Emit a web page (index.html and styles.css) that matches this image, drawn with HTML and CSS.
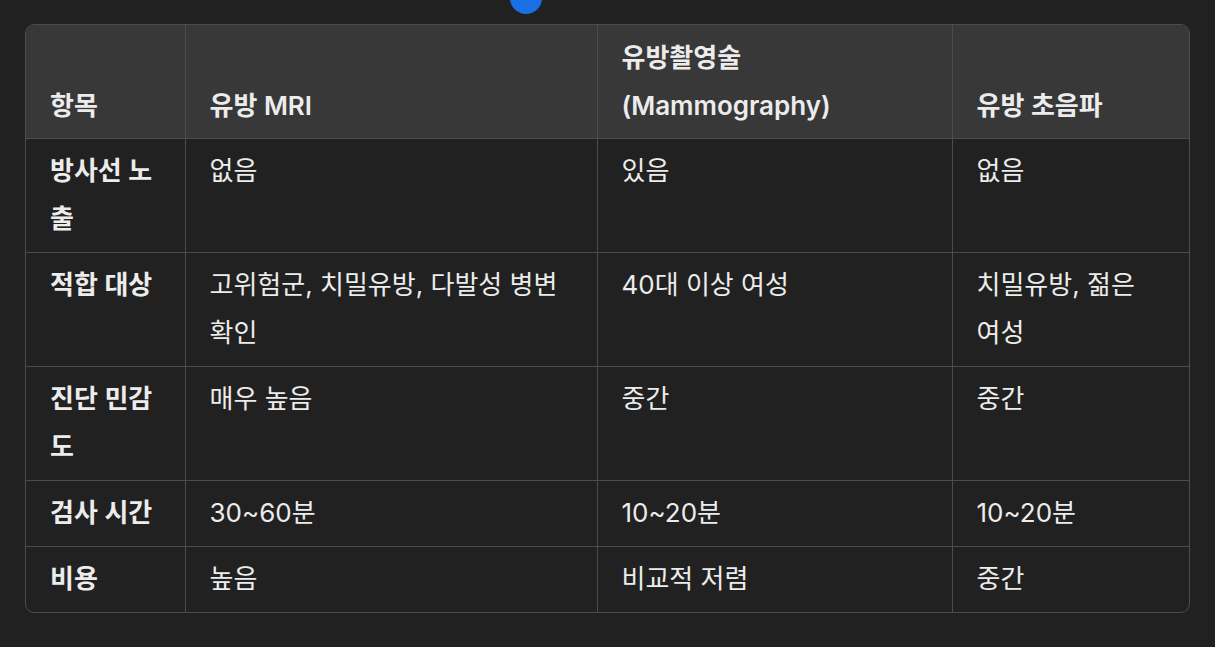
FILE: index.html
```html
<!DOCTYPE html>
<html lang="ko">
<head>
<meta charset="utf-8">
<link rel="stylesheet" href="styles.css">
</head>
<body>
<div class="page">
  <span class="dot"></span>
  <div class="table-wrap">
    <table class="compare">
      <colgroup>
        <col class="c1"><col class="c2"><col class="c3"><col class="c4">
      </colgroup>
      <thead>
        <tr><th>항목</th><th>유방 MRI</th><th>유방촬영술 (Mammography)</th><th>유방 초음파</th></tr>
      </thead>
      <tbody>
        <tr><td class="label">방사선 노출</td><td>없음</td><td>있음</td><td>없음</td></tr>
        <tr><td class="label">적합 대상</td><td>고위험군, 치밀유방, 다발성 병변 확인</td><td>40대 이상 여성</td><td>치밀유방, 젊은 여성</td></tr>
        <tr><td class="label">진단 민감도</td><td>매우 높음</td><td>중간</td><td>중간</td></tr>
        <tr><td class="label">검사 시간</td><td>30~60분</td><td>10~20분</td><td>10~20분</td></tr>
        <tr><td class="label">비용</td><td>높음</td><td>비교적 저렴</td><td>중간</td></tr>
      </tbody>
    </table>
  </div>
</div>
</body>
</html>
```
FILE: styles.css
```css
html, body {
  margin: 0;
  background: #212121;
}
body {
  font-family: "Inter", "Noto Sans CJK KR", sans-serif;
  color: #ececec;
}
.page {
  position: relative;
  padding: 24px 25px;
  height: 599px;
  overflow: hidden;
}
.dot {
  position: absolute;
  left: 510px;
  top: -18px;
  width: 32px;
  height: 32px;
  border-radius: 50%;
  background: #1b6fe4;
}
.table-wrap {
  border: 1px solid #4c4c4c;
  border-radius: 9px;
  overflow: hidden;
}
.compare {
  width: 100%;
  border-collapse: collapse;
  table-layout: fixed;
  font-size: 26px;
  line-height: 48px;
}
.c1 { width: 159px; }
.c2 { width: 412px; }
.c3 { width: 355px; }
.compare th,
.compare td {
  text-align: left;
  border-right: 1px solid #4c4c4c;
  border-bottom: 1px solid #4c4c4c;
}
.compare th:last-child,
.compare td:last-child {
  border-right: none;
}
.compare tbody tr:last-child td {
  border-bottom: none;
}
.compare th {
  padding: 9px 24px 8px;
  background: #383838;
  font-weight: 600;
  vertical-align: bottom;
}
.compare td {
  padding: 8px 24px 9px;
  vertical-align: top;
  font-weight: 400;
}
.compare td.label {
  font-weight: 600;
}
```
